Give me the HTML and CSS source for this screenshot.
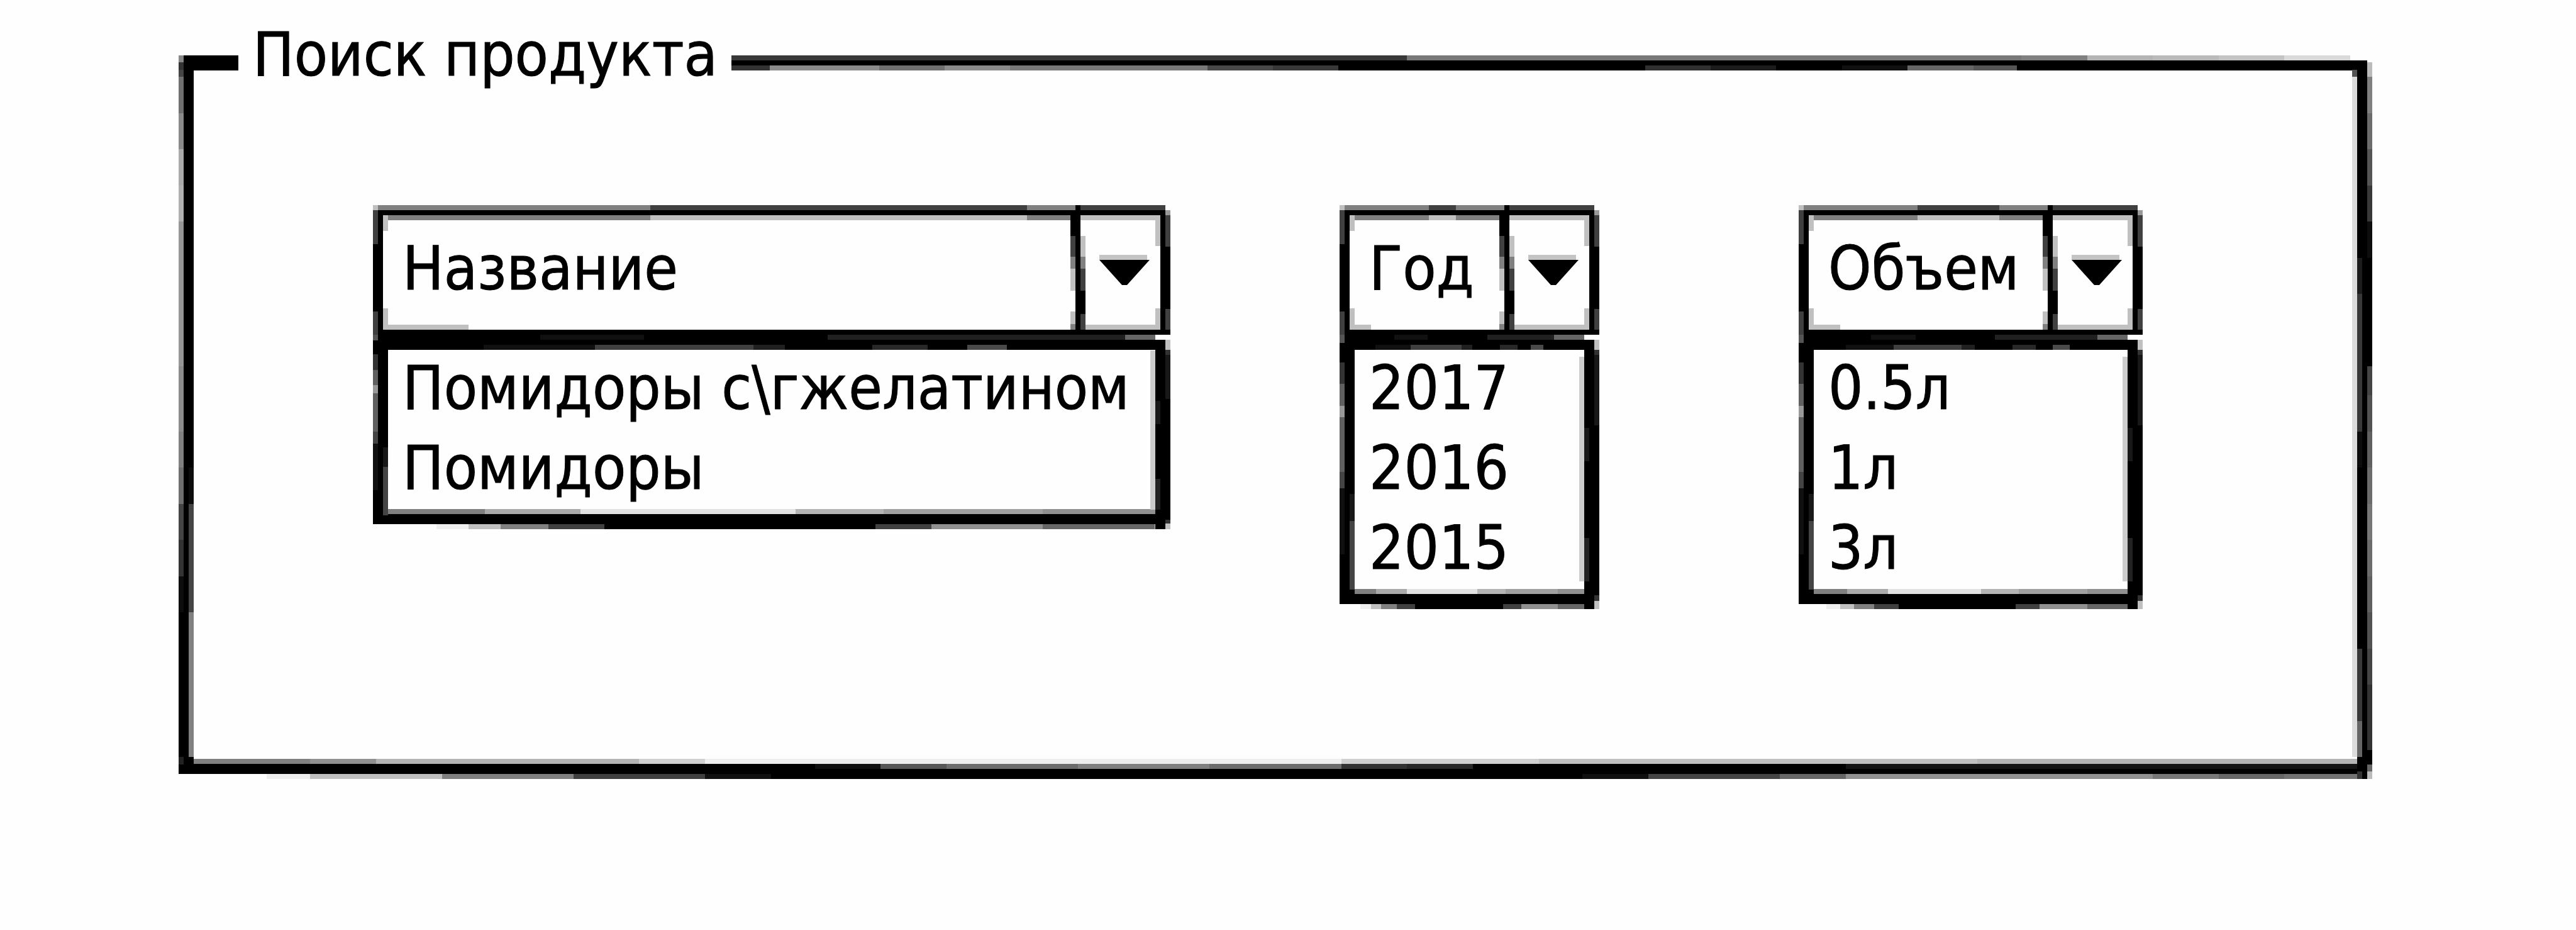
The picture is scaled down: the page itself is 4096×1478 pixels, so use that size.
FILE: index.html
```html
<!DOCTYPE html>
<html lang="ru">
<head>
  <meta charset="utf-8">
  <title>Поиск продукта</title>
  <link rel="stylesheet" href="styles.css">
</head>
<body>
  <form class="search">
    <fieldset class="group">
      <legend class="group-title">Поиск продукта</legend>
      <div class="filters">
        <div class="combo">
          <div class="combo-head">
            <select class="combo-select" aria-label="Название">
              <option>Название</option>
            </select>
            <svg class="combo-arrow" viewBox="0 0 84 48" aria-hidden="true"><path class="arrow-edge" d="M0 0h76v8H0z"/><path d="M0 8h80L44 48h-8z"/></svg>
          </div>
          <ul class="combo-list">
            <li>Помидоры с\гжелатином</li>
            <li>Помидоры</li>
          </ul>
        </div>
        <div class="combo combo-year">
          <div class="combo-head">
            <select class="combo-select" aria-label="Год">
              <option>Год</option>
            </select>
            <svg class="combo-arrow" viewBox="0 0 84 48" aria-hidden="true"><path class="arrow-edge" d="M0 0h76v8H0z"/><path d="M0 8h80L44 48h-8z"/></svg>
          </div>
          <ul class="combo-list">
            <li>2017</li>
            <li>2016</li>
            <li>2015</li>
          </ul>
        </div>
        <div class="combo combo-volume">
          <div class="combo-head">
            <select class="combo-select" aria-label="Объем">
              <option>Объем</option>
            </select>
            <svg class="combo-arrow" viewBox="0 0 84 48" aria-hidden="true"><path class="arrow-edge" d="M0 0h76v8H0z"/><path d="M0 8h80L44 48h-8z"/></svg>
          </div>
          <ul class="combo-list">
            <li>0.5л</li>
            <li>1л</li>
            <li>3л</li>
          </ul>
        </div>
      </div>
    </fieldset>
  </form>
</body>
</html>
```
FILE: styles.css
```css
* {
  box-sizing: border-box;
}

body {
  margin: 0;
  background: #fefefe;
  color: #000;
  font: 97px/127px "DejaVu Sans Condensed", "DejaVu Sans", sans-serif;
  -webkit-text-stroke: 1px #000;
}

.search {
  padding: 23px 324px 0 284px;
}

.group {
  position: relative;
  min-width: 0;
  margin: 0;
  padding: 0 0 270px;
  border: 0;
}

/* Sketched outline, starting at the middle of the title line: each 8px strip carries its own shades of ink */
.group::before {
  content: "";
  position: absolute;
  inset: -62px 0 0;
  background:
    linear-gradient(#888 0 1%, #333 0 2%, #444 0 3%, #707070 0 8%, #8a8a8a 0 13%, #aaa 0 18%, #b0b0b0 0 23%, #969696 0 43%, #8c8c8c 0 52%, #808080 0 57%, #6e6e6e 0 62%, #444 0 67%, #333 0 72%, #0c0c0c 0 77%, #000 0 97%, #222 0 98%, #000 0 99%, transparent 0) 0 0 / 8px 100%,
    linear-gradient(#000 0 99%, transparent 0) 8px 0 / 8px 100%,
    linear-gradient(#000 0 57%, #0c0c0c 0 62%, #444 0 77%, #808080 0 97%, #000 0 99%, transparent 0) 16px 0 / 8px 100%,
    linear-gradient(transparent 0 2%, #555 0 3%, #dcdcdc 0 97%, transparent 0) right 24px top 0 / 8px 100%,
    linear-gradient(transparent 0 1%, #000 0 28%, #1c1c1c 0 33%, #383838 0 52%, #0c0c0c 0 57%, #000 0 82%, #383838 0 92%, #666 0 97%, #000 0 99%, #333 0) right 16px top 0 / 8px 100%,
    linear-gradient(transparent 0 1%, #000 0) right 8px top 0 / 8px 100%,
    linear-gradient(transparent 0 1%, #bbb 0 3%, #808080 0 8%, #6c6c6c 0 13%, #555 0 18%, #383838 0 23%, #0c0c0c 0 28%, #000 0 43%, #444 0 47%, #525252 0 52%, #606060 0 57%, #6c6c6c 0 62%, #777 0 67%, #6c6c6c 0 72%, #606060 0 77%, #525252 0 82%, #444 0 87%, #333 0 96%, #000 0 98%, #666 0 99%, #bbb 0) right 0 top 0 / 8px 100%,
    linear-gradient(90deg, #000 0 10%, #383838 0 56%, #787878 0 84%, #808080 0 87%, #b4b4b4 0 90%, #bababa 0 93%, #c4c4c4 0 96%, #dadada 0 99%, transparent 0) 0 0 / 100% 8px,
    linear-gradient(#000 0 0) 0 8px / calc(100% - 8px) 8px,
    linear-gradient(90deg, #000 0 10%, #333 0 27%, #8c8c8c 0 32%, #707070 0 35%, #8c8c8c 0 38%, #787878 0 47%, #484848 0 50%, #383838 0 53%, #000 0 67%, #303030 0 70%, #1c1c1c 0 73%, #000 0 76%, #101010 0 79%, #666 0 82%, #555 0 84%, #000 0) 0 16px / calc(100% - 8px) 8px,
    linear-gradient(90deg, #808080 0 6%, #909090 0 9%, #b4b4b4 0 21%, #d0d0d0 0 24%, #eee 0 53%, #d0d0d0 0 62%, #c0c0c0 0 82%, #b4b4b4 0) 0 calc(100% - 24px) / 100% 8px,
    linear-gradient(90deg, #000 0 29%, #101010 0 32%, #555 0 35%, #6c6c6c 0 41%, #808080 0 47%, #6c6c6c 0 53%, #333 0 56%, #282828 0 59%, #000 0 76%, #141414 0) 0 calc(100% - 16px) / 100% 8px,
    linear-gradient(#000 0 0) 0 calc(100% - 8px) / 100% 8px,
    linear-gradient(90deg, transparent 0 4%, #eee 0 6%, #c0c0c0 0 12%, #808080 0 18%, #404040 0 24%, #101010 0 27%, #000 0 64%, #101010 0 67%, #444 0 73%, #666 0 76%, #909090 0 90%, #787878 0 93%, #666 0 96%, #727272 0) 0 100% / 100% 8px;
  background-repeat: no-repeat;
}

.group-title {
  position: relative;
  z-index: 1;
  margin-left: 95px;
  padding: 0 22px 0 23px;
  background: #fefefe;
}

.filters {
  position: relative;
  display: grid;
  grid-template-columns: 1fr 269px 413px 317px 547px;
  align-items: start;
  padding: 176px 365px 0 309px;
}

.combo-year {
  grid-column: 3;
}

.combo-volume {
  grid-column: 5;
}

.combo-head {
  position: relative;
  height: 206px;
  background:
    linear-gradient(#404040 0 26%, #000 0 78%, #404040 0) 0 8px / 8px 100%,
    linear-gradient(#000 0 0) 8px 8px / 8px 100%,
    linear-gradient(#c0c0c0 0 12%, transparent 0 72%, #c0c0c0 0 86%, transparent 0) 16px 16px / 8px 100%,
    linear-gradient(#c0c0c0 0 24%, transparent 0 72%, #c0c0c0 0 86%, transparent 0) right 16px top 16px / 8px 100%,
    linear-gradient(#000 0 0) right 8px top 8px / 8px 100%,
    linear-gradient(#999 0 4%, #404040 0 28%, #000 0 76%, #404040 0 92%, #000 0) right 0 top 8px / 8px 100%,
    linear-gradient(#000 0 20%, #404040 0 36%, #808080 0 45%, #c0c0c0 0 62%, transparent 0 78%, #c0c0c0 0 88%, #808080 0 92%, #000 0) right 151px top 8px / 8px 100%,
    linear-gradient(#000 0 0) right 143px top 0 / 8px 100%,
    linear-gradient(transparent 0 20%, #c0c0c0 0 36%, #808080 0 45%, #404040 0 62%, #000 0 80%, #404040 0 92%, #000 0) right 135px top 8px / 8px 100%,
    linear-gradient(90deg, #c0c0c0 0 8px, #808080 0 35%, #404040 0 calc(100% - 220px), #808080 0 calc(100% - 143px), #404040 0) 0 0 / calc(100% - 8px) 8px,
    linear-gradient(#000 0 0) 0 8px / calc(100% - 8px) 8px,
    linear-gradient(90deg, #808080 0 35%, #c0c0c0 0 calc(100% - 220px), #808080 0 calc(100% - 143px), #c0c0c0 0) 0 16px / calc(100% - 8px) 8px,
    linear-gradient(#000 0 0) 0 100% / 100% 8px,
    linear-gradient(90deg, #c0c0c0 0 12%, transparent 0 calc(100% - 143px), #c0c0c0 0) 0 calc(100% - 8px) / 100% 8px;
  background-repeat: no-repeat;
}

.combo-select {
  display: block;
  width: 100%;
  height: 206px;
  margin: 0;
  padding: 37px 135px 42px 47px;
  border: 0;
  background: transparent;
  color: inherit;
  font: inherit;
  appearance: none;
}

.combo-arrow {
  position: absolute;
  top: 79px;
  right: 29px;
  width: 84px;
  height: 48px;
  pointer-events: none;
}

.arrow-edge {
  fill: #c4c4c4;
}

.combo-list {
  margin: 0;
  padding: 21px 39px 34px 47px;
  list-style: none;
  white-space: nowrap;
  background:
    linear-gradient(#555 0 3%, #000 0 10%, #333 0 18%, #606060 0 26%, #999 0 30%, #606060 0 50%, #444 0 56%, #101010 0 80%, #000 0 97%, transparent 0) 0 0 / 8px 100%,
    linear-gradient(#000 0 97%, transparent 0) 8px 0 / 8px 100%,
    linear-gradient(#000 0 58%, #181818 0 68%, #444 0 93%, #000 0 97%, transparent 0) 16px 0 / 8px 100%,
    linear-gradient(transparent 0 8%, #ccc 0 90%, transparent 0) right 24px top 0 / 8px 100%,
    linear-gradient(transparent 0 8px, #000 0 34%, #181818 0 46%, #000 0 74%, #222 0 90%, #000 0) right 16px top 0 / 8px 100%,
    linear-gradient(transparent 0 8px, #000 0) right 8px top 0 / 8px 100%,
    linear-gradient(transparent 0 8px, #c0c0c0 0 24px, #333 0 32px, #181818 0 33%, #000 0 95%, #333 0 97%, #c0c0c0 0) right 0 top 0 / 8px 100%,
    linear-gradient(90deg, #000 0 21%, #101010 0 34%, #000 0 57%, #202020 0 calc(100% - 72px), #666 0 calc(100% - 24px), transparent 0) 0 0 / 100% 8px,
    linear-gradient(#000 0 0) 0 8px / calc(100% - 8px) 8px,
    linear-gradient(90deg, #000 0 14%, #101010 0 28%, #404040 0 48%, #202020 0 52%, #000 0 63%, #282828 0 70%, #000 0 75%, #4a4a4a 0 80%, #000 0) 0 16px / calc(100% - 8px) 8px,
    linear-gradient(90deg, #808080 0 14%, #aaa 0 26%, #e2e2e2 0 53%, #b4b4b4 0 64%, #a0a0a0 0 84%, #909090 0) 0 calc(100% - 24px) / 100% 8px,
    linear-gradient(#000 0 0) 0 calc(100% - 8px) / calc(100% - 8px) 16px,
    linear-gradient(90deg, transparent 0 8%, #eee 0 12%, #c0c0c0 0 16%, #808080 0 22%, #404040 0 29%, #000 0 63%, #404040 0 70%, #909090 0 84%, #666 0 98%, #c0c0c0 0) 0 100% / 100% 8px;
  background-repeat: no-repeat;
}
```
